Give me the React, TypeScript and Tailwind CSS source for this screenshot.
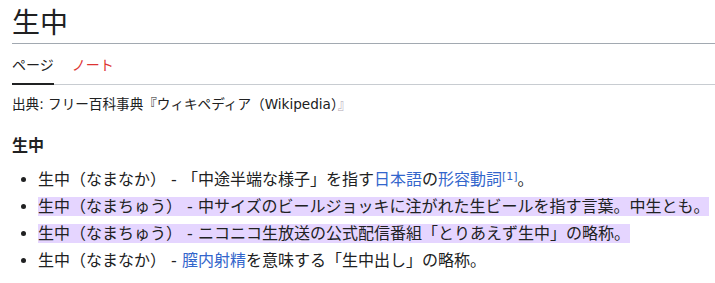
const font = "font-['DejaVu_Sans','Noto_Sans_CJK_JP',sans-serif]";

function Link({ children }: { children: React.ReactNode }) {
  return <a className="text-[#3366cc]">{children}</a>;
}

export default function App() {
  return (
    <div className={`${font} bg-white pl-3 text-[#202122] w-[715px] h-[283px] overflow-hidden`}>
      {/* Title */}
      <h1 className="text-[28px] leading-[39px] pt-[4px] border-b border-[#a2a9b1]">生中</h1>

      {/* Tabs */}
      <div className="flex items-end gap-[18px] h-[41px] border-b border-[#c8ccd1] text-[14px]">
        <span className="leading-[20px] pb-[8px] border-b-2 border-[#202122] -mb-px">ページ</span>
        <span className="leading-[20px] pb-[9px] text-[#d33]">ノート</span>
      </div>

      {/* Site sub */}
      <div className="mt-[9px] text-[13.6px] leading-[20px]">
        出典: フリー百科事典『ウィキペディア（Wikipedia）<span className="text-[#b0a8b4]">』</span>
      </div>

      <h3 className="mt-[20px] text-[16px] font-bold leading-[24px]">生中</h3>

      <ul className="mt-[8px] list-disc pl-[26px] text-[16px] leading-[27px] whitespace-nowrap">
        <li>
          生中（なまなか） - 「中途半端な様子」を指す<Link>日本語</Link>の<Link>形容動詞</Link>
          <sup className="text-[11px] text-[#3366cc] leading-none">[1]</sup>。
        </li>
        <li>
          <span className="bg-[#e5d5ff]">生中（なまちゅう） - 中サイズのビールジョッキに注がれた生ビールを指す言葉。中生とも。</span>
        </li>
        <li>
          <span className="bg-[#e5d5ff]">生中（なまちゅう） - ニコニコ生放送の公式配信番組「とりあえず生中」の略称。</span>
        </li>
        <li>
          生中（なまなか） - <Link>膣内射精</Link>を意味する「生中出し」の略称。
        </li>
      </ul>
    </div>
  );
}
